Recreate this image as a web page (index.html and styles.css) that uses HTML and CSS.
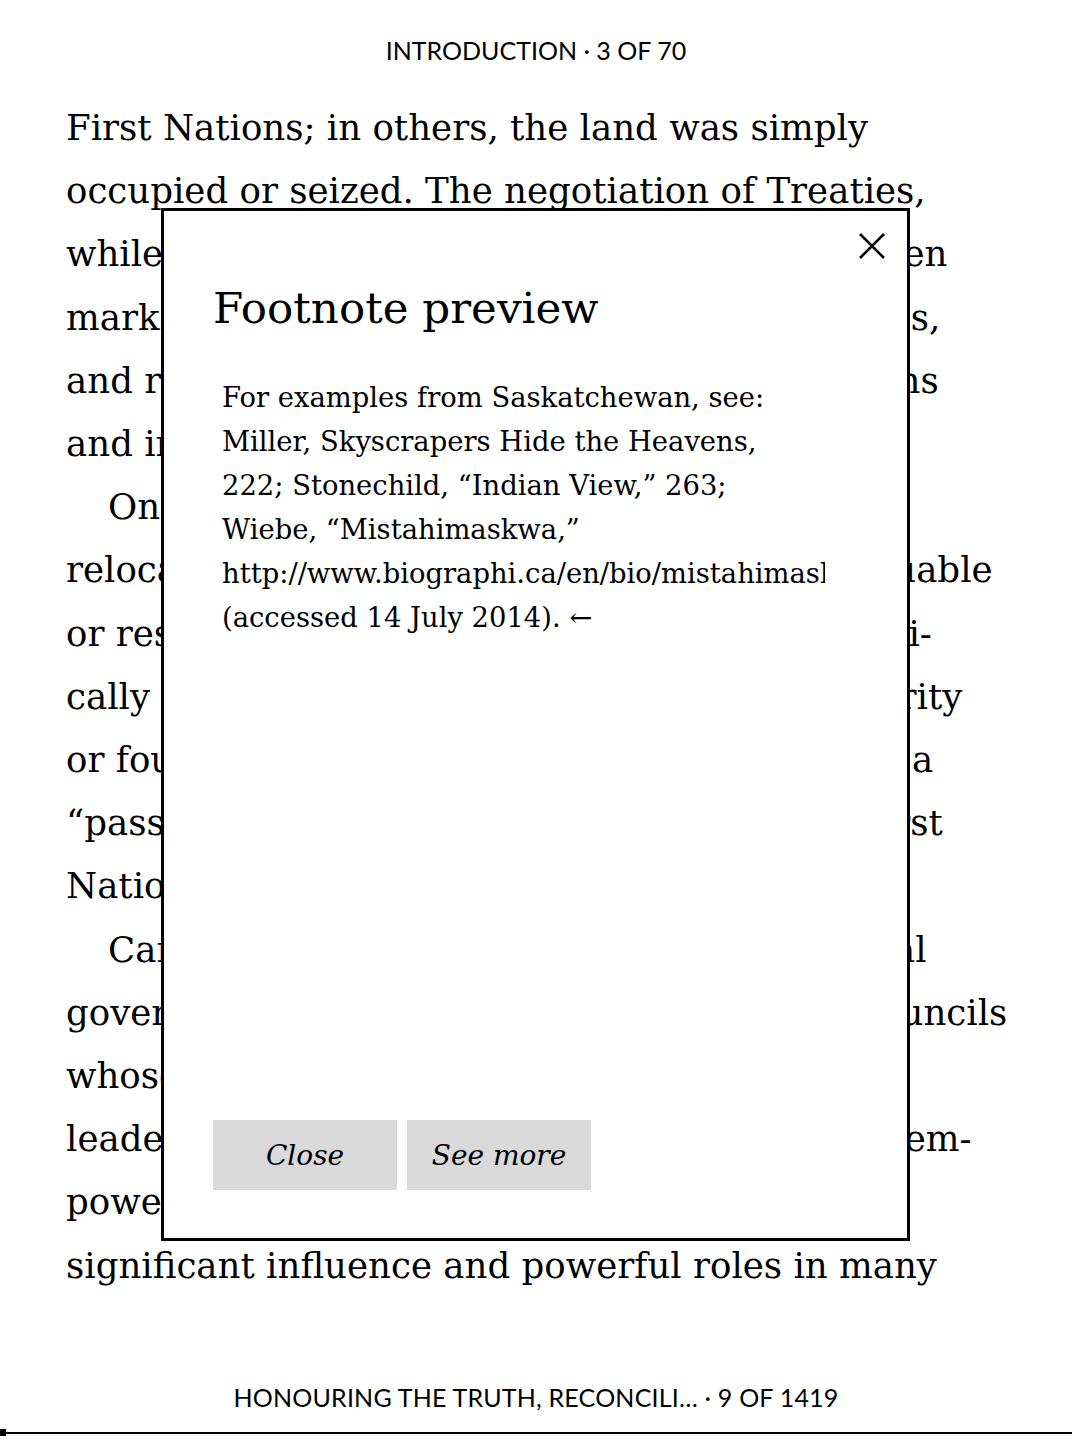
FILE: index.html
```html
<!DOCTYPE html>
<html lang="en">
<head>
<meta charset="utf-8">
<title>Reader</title>
<link rel="stylesheet" href="styles.css">
</head>
<body>
<div class="page">
  <header class="running-head">INTRODUCTION · 3 OF 70</header>
  <main class="text">
    <div class="ln">First Nations; in others, the land was simply</div>
    <div class="ln">occupied or seized. The negotiation of Treaties,</div>
    <div class="ln">while seemingly honourable and legal, was often</div>
    <div class="ln">marked by fraud and coercion, and Canada was,</div>
    <div class="ln">and remains, slow to implement their provisions</div>
    <div class="ln">and intent.</div>
    <div class="ln indent">On many occasions, Canada forced</div>
    <div class="ln">relocate their reserves from agriculturally valuable</div>
    <div class="ln">or resource-rich land onto remote and economi-</div>
    <div class="ln">cally marginal reserves. Without a legal authority</div>
    <div class="ln">or foundation, the government later instituted a</div>
    <div class="ln">“pass system” that was intended to confine First</div>
    <div class="ln">Nations people to their reserves.</div>
    <div class="ln indent">Canada replaced existing forms of Aboriginal</div>
    <div class="ln">government with relatively powerless band councils</div>
    <div class="ln">whose decisions it could override.</div>
    <div class="ln">leaders it could depose. In this way, it then disem-</div>
    <div class="ln">powered Aboriginal women, who</div>
    <div class="ln">significant influence and powerful roles in many</div>
  </main>
  <footer class="running-foot">HONOURING THE TRUTH, RECONCILI… · 9 OF 1419</footer>
  <div class="progress"><span class="progress-mark"></span></div>

  <section class="modal">
    <button class="modal-x" aria-label="Close">
      <svg width="28" height="28" viewBox="0 0 28 28"><path d="M2 2 L26 26 M26 2 L2 26" stroke="#000" stroke-width="2.6" fill="none"/></svg>
    </button>
    <h1 class="modal-title">Footnote preview</h1>
    <div class="note">
      <p>For examples from Saskatchewan, see:<br>Miller, Skyscrapers Hide the Heavens,<br>222; Stonechild, “Indian View,” 263;<br>Wiebe, “Mistahimaskwa,”<br>http://www.biographi.ca/en/bio/mistahimaskwa_11E.html<br>(accessed 14 July 2014). ←</p>
    </div>
    <div class="actions">
      <button class="btn">Close</button>
      <button class="btn">See more</button>
    </div>
  </section>
</div>
</body>
</html>
```

FILE: styles.css
```css
html, body {
  margin: 0;
  padding: 0;
  background: #fff;
}
.page {
  position: relative;
  width: 1072px;
  height: 1448px;
  overflow: hidden;
  color: #000;
}
.running-head {
  font-family: "Lato", "Noto Sans", sans-serif;
  font-size: 25px;
  text-align: center;
  padding-top: 35px;
  height: 30px;
  line-height: 30px;
}
.text {
  font-family: "DejaVu Serif", Georgia, serif;
  font-size: 35.6px;
  line-height: 63.2px;
  padding: 31px 0 0 66px;
  height: 1202px;
}
.ln {
  white-space: nowrap;
}
.indent {
  padding-left: 42px;
}
.running-foot {
  font-family: "Lato", "Noto Sans", sans-serif;
  font-size: 25px;
  letter-spacing: 0.2px;
  text-align: center;
  line-height: 30px;
  margin-top: 84px;
}
.progress {
  position: absolute;
  left: 0;
  right: 0;
  top: 1432px;
  height: 2px;
  background: #000;
}
.progress-mark {
  position: absolute;
  left: 0;
  top: -3px;
  width: 6px;
  height: 7px;
  background: #000;
}
.modal {
  position: absolute;
  left: 161px;
  top: 208px;
  width: 749px;
  height: 1033px;
  box-sizing: border-box;
  border: 3px solid #000;
  background: #fff;
  display: flex;
  flex-direction: column;
  padding: 0 50px 48px 49px;
}
.modal-x {
  position: absolute;
  top: 21px;
  right: 21px;
  border: 0;
  background: none;
  padding: 0;
  width: 28px;
  height: 28px;
}
.modal-title {
  font-family: "DejaVu Serif", Georgia, serif;
  font-weight: normal;
  font-size: 43.6px;
  line-height: 56px;
  margin: 69px 0 0 0;
}
.note {
  flex: 1;
  margin: 40px 0 0 9px;
  width: 603px;
  overflow: hidden;
  font-family: "DejaVu Serif", Georgia, serif;
  font-size: 27.4px;
  line-height: 44px;
}
.note p {
  margin: 0;
  white-space: nowrap;
}
.actions {
  display: flex;
  gap: 10px;
}
.btn {
  width: 184px;
  height: 70px;
  border: 0;
  background: #d9d9d9;
  font-family: "DejaVu Serif", Georgia, serif;
  font-style: italic;
  font-size: 28px;
  color: #000;
  padding: 0;
}
```
